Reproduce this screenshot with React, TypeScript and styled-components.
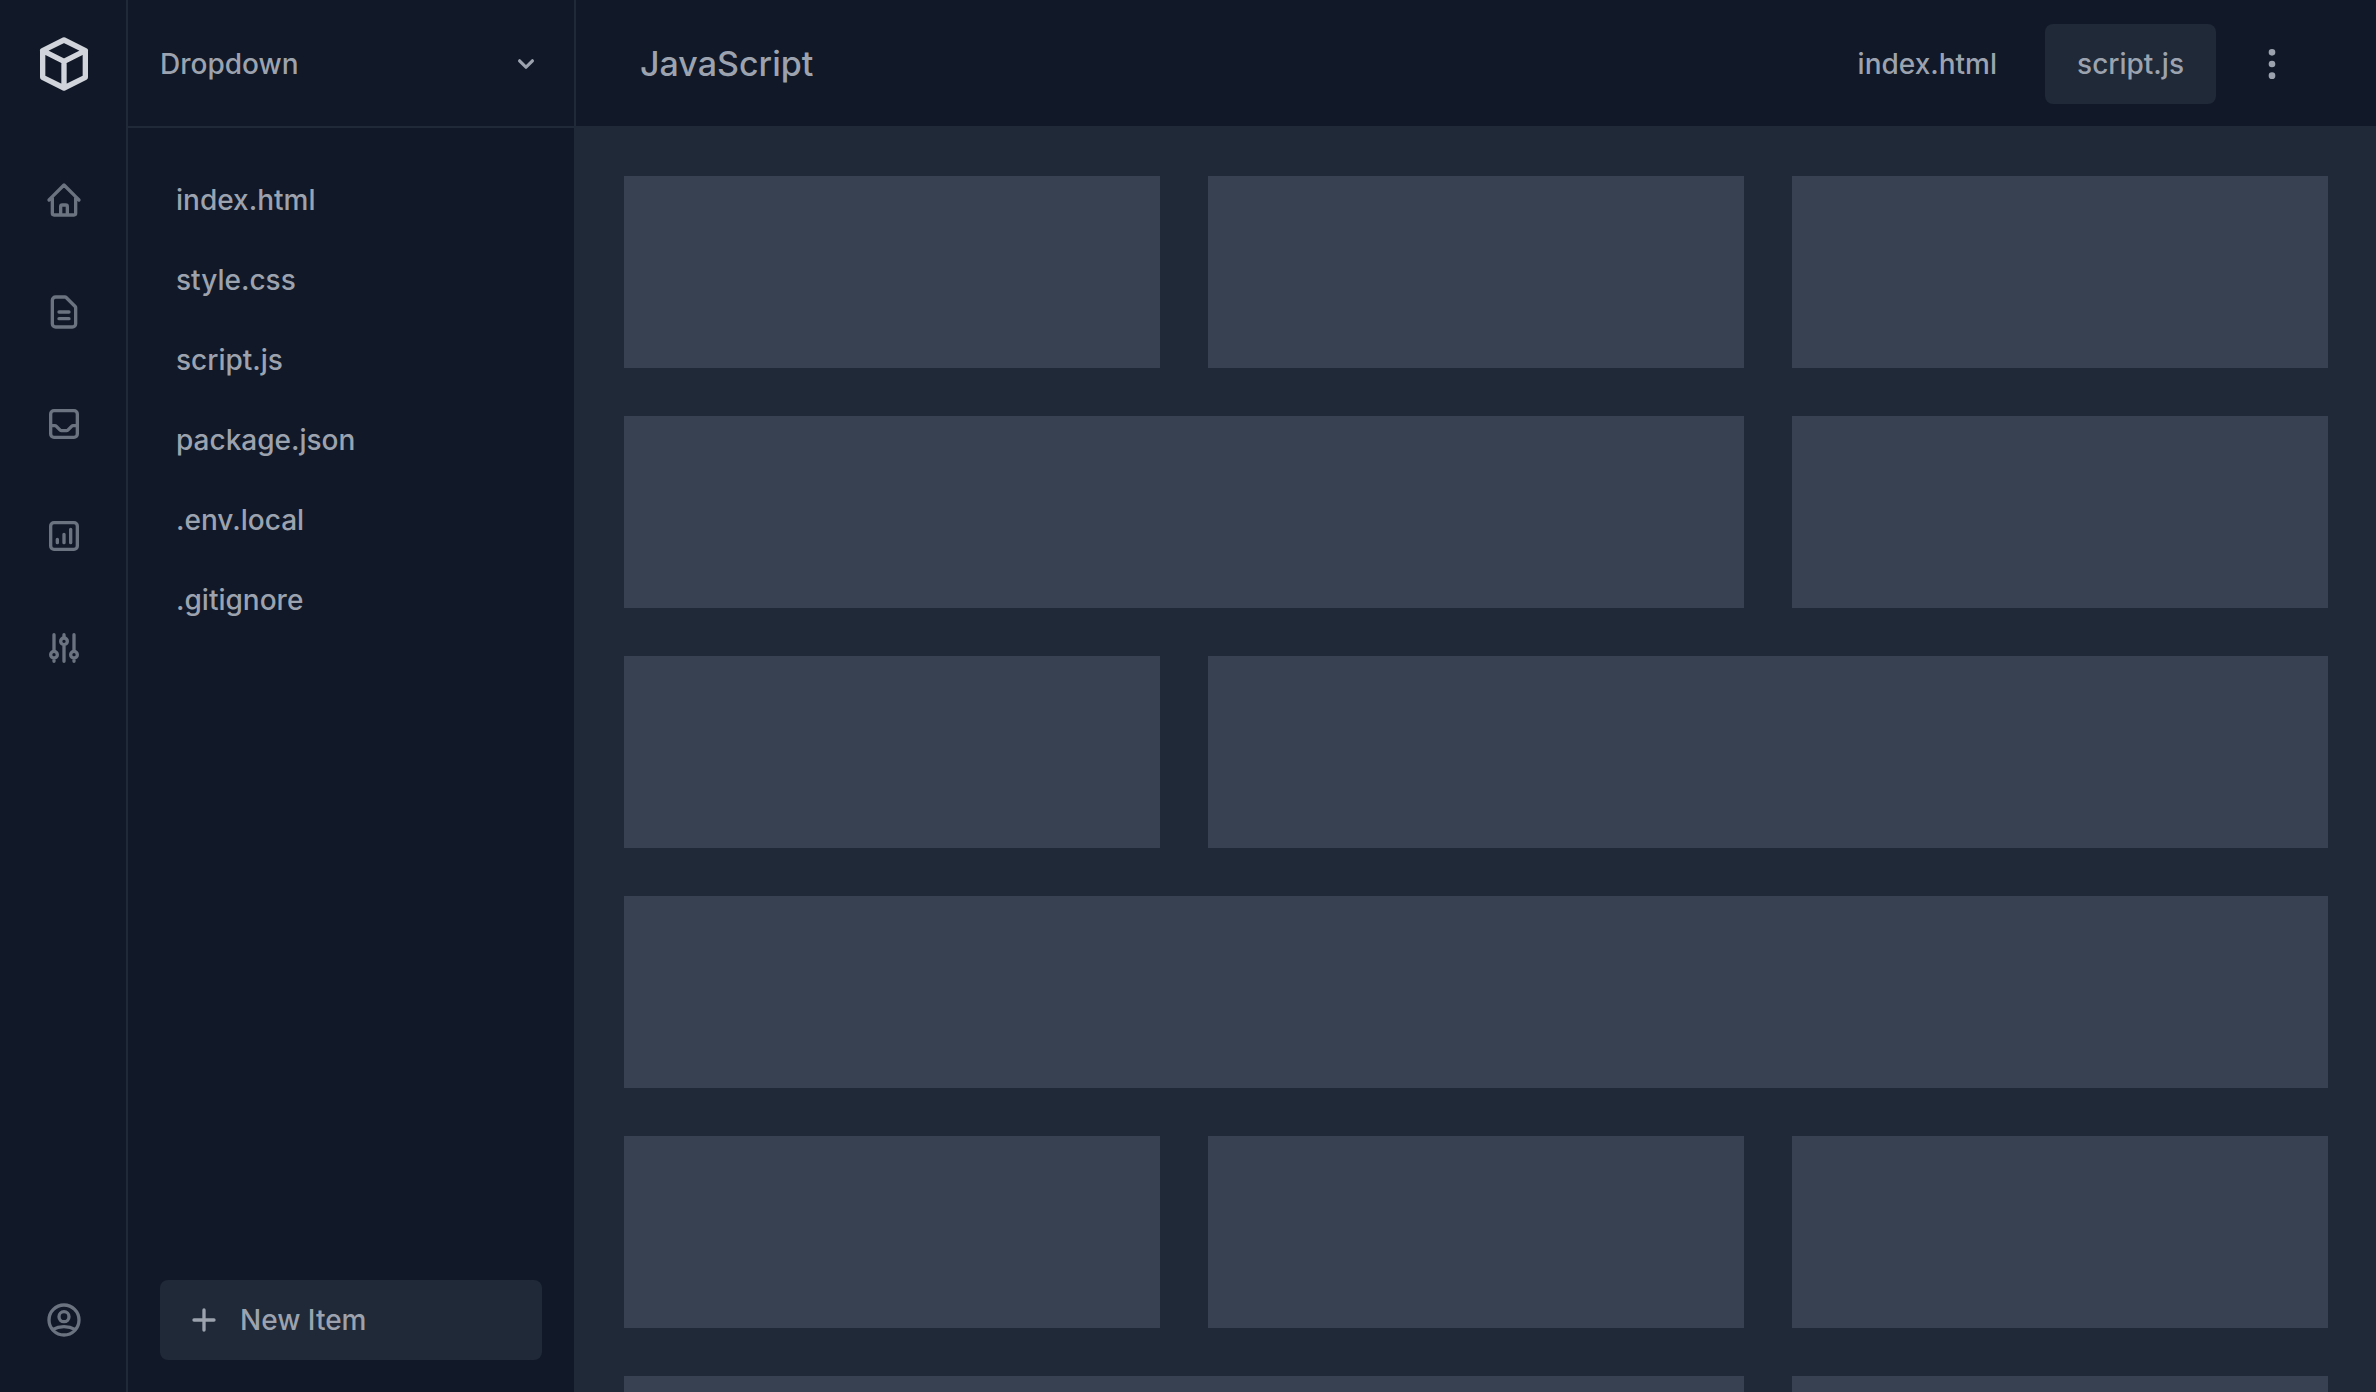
import React from "react";
import styled, { createGlobalStyle } from "styled-components";

const colors = {
  base: "#111827",
  line: "#1f2937",
  card: "#374151",
  muted: "#6b7280",
  text: "#9ca3af",
  bright: "#d1d5db",
};

const GlobalStyle = createGlobalStyle`
  *, *::before, *::after { box-sizing: border-box; }
  body {
    margin: 0;
    background: ${colors.line};
    color: ${colors.text};
    font: 500 28px/40px Inter, "Liberation Sans", sans-serif;
    -webkit-font-smoothing: antialiased;
  }
  button, a { font: inherit; color: inherit; }
`;

const Shell = styled.div`
  display: flex;
  height: 100vh;
  overflow: hidden;
`;

const Rail = styled.nav`
  display: flex;
  flex: none;
  flex-direction: column;
  align-items: center;
  width: 128px;
  padding-bottom: 32px;
  background: ${colors.base};
  box-shadow: inset -2px 0 ${colors.line};
`;

const Brand = styled.a`
  display: flex;
  align-items: center;
  justify-content: center;
  height: 128px;
  color: ${colors.bright};
`;

const RailLinks = styled.div`
  display: flex;
  flex: 1;
  flex-direction: column;
  gap: 32px;
  margin-top: 32px;
`;

const IconButton = styled.button<{ $muted?: boolean }>`
  display: flex;
  align-items: center;
  justify-content: center;
  width: 80px;
  height: 80px;
  padding: 0;
  border: 0;
  border-radius: 8px;
  background: none;
  color: ${(p) => (p.$muted ? colors.muted : colors.text)};
  cursor: pointer;
  &:hover { background: ${colors.line}; }
`;

const Sidebar = styled.aside`
  display: flex;
  flex: none;
  flex-direction: column;
  width: 448px;
  background: ${colors.base};
  border-right: 2px solid ${colors.line};
`;

const Dropdown = styled.button`
  display: flex;
  align-items: center;
  justify-content: space-between;
  height: 128px;
  padding: 0 32px;
  border: 0;
  background: none;
  box-shadow: inset 0 -2px ${colors.line};
  text-align: left;
  cursor: pointer;
`;

const Files = styled.nav`
  display: flex;
  flex: 1;
  flex-direction: column;
  padding: 32px 16px 0;
`;

const FileLink = styled.a`
  display: flex;
  align-items: center;
  height: 80px;
  padding: 0 32px;
  border-radius: 8px;
  text-decoration: none;
  &:hover { background: ${colors.line}; }
`;

const NewItem = styled.button`
  display: flex;
  align-items: center;
  gap: 16px;
  height: 80px;
  margin: 0 32px 32px;
  padding: 0 24px;
  border: 0;
  border-radius: 8px;
  background: ${colors.line};
  cursor: pointer;
`;

const Main = styled.main`
  display: flex;
  flex: 1;
  flex-direction: column;
  min-width: 0;
`;

const Header = styled.header`
  display: flex;
  flex: none;
  align-items: center;
  gap: 16px;
  height: 128px;
  padding: 0 64px;
  background: ${colors.base};
  box-shadow: inset 0 -2px ${colors.line};
`;

const Title = styled.h1`
  margin: 0 auto 0 0;
  font-size: 34px;
  font-weight: 500;
  line-height: 56px;
`;

const Tab = styled.button<{ $active?: boolean }>`
  height: 80px;
  padding: 0 32px;
  border: 0;
  border-radius: 8px;
  background: ${(p) => (p.$active ? colors.line : "none")};
  cursor: pointer;
`;

const Board = styled.section`
  display: grid;
  flex: 1;
  grid-template-columns: repeat(3, 1fr);
  grid-auto-rows: 192px;
  gap: 48px;
  padding: 48px;
  overflow: auto;
  scrollbar-width: none;
`;

const Card = styled.div<{ $span: number }>`
  grid-column: span ${(p) => p.$span};
  background: ${colors.card};
`;

const paths = {
  cube: "M20 7l-8-4-8 4m16 0l-8 4m8-4v10l-8 4m0-10L4 7m8 4v10M4 7v10l8 4",
  home: "M3 12l2-2m0 0l7-7 7 7M5 10v10a1 1 0 001 1h3m10-11l2 2m-2-2v10a1 1 0 01-1 1h-3m-6 0a1 1 0 001-1v-4a1 1 0 011-1h2a1 1 0 011 1v4a1 1 0 001 1m-6 0h6",
  document:
    "M9 12h6m-6 4h6m2 5H7a2 2 0 01-2-2V5a2 2 0 012-2h5.586a1 1 0 01.707.293l5.414 5.414a1 1 0 01.293.707V19a2 2 0 01-2 2z",
  inbox:
    "M20 13V6a2 2 0 00-2-2H6a2 2 0 00-2 2v7m16 0v5a2 2 0 01-2 2H6a2 2 0 01-2-2v-5m16 0h-2.586a1 1 0 00-.707.293l-2.414 2.414a1 1 0 01-.707.293h-3.172a1 1 0 01-.707-.293l-2.414-2.414A1 1 0 006.586 13H4",
  chart:
    "M16 8v8m-4-5v5m-4-2v2m-2 4h12a2 2 0 002-2V6a2 2 0 00-2-2H6a2 2 0 00-2 2v12a2 2 0 002 2z",
  sliders:
    "M12 6V4m0 2a2 2 0 100 4m0-4a2 2 0 110 4m-6 8a2 2 0 100-4m0 4a2 2 0 110-4m0 4v2m0-6V4m6 6v10m6-2a2 2 0 100-4m0 4a2 2 0 110-4m0 4v2m0-6V4",
  user: "M5.121 17.804A13.937 13.937 0 0112 16c2.5 0 4.847.655 6.879 1.804M15 10a3 3 0 11-6 0 3 3 0 016 0zm6 2a9 9 0 11-18 0 9 9 0 0118 0z",
  plus: "M12 6v6m0 0v6m0-6h6m-6 0H6",
  dots: "M12 5v.01M12 12v.01M12 19v.01M12 6a1 1 0 110-2 1 1 0 010 2zm0 7a1 1 0 110-2 1 1 0 010 2zm0 7a1 1 0 110-2 1 1 0 010 2z",
};

function Icon({ name, size = 40 }: { name: keyof typeof paths; size?: number }) {
  return (
    <svg
      width={size}
      height={size}
      viewBox="0 0 24 24"
      fill="none"
      stroke="currentColor"
      strokeWidth={2}
      strokeLinecap="round"
      strokeLinejoin="round"
      aria-hidden="true"
    >
      <path d={paths[name]} />
    </svg>
  );
}

function Chevron() {
  return (
    <svg width={32} height={32} viewBox="0 0 20 20" fill="currentColor" aria-hidden="true">
      <path
        fillRule="evenodd"
        clipRule="evenodd"
        d="M5.293 7.293a1 1 0 011.414 0L10 10.586l3.293-3.293a1 1 0 111.414 1.414l-4 4a1 1 0 01-1.414 0l-4-4a1 1 0 010-1.414z"
      />
    </svg>
  );
}

const railItems: { icon: keyof typeof paths; label: string }[] = [
  { icon: "home", label: "Home" },
  { icon: "document", label: "Documents" },
  { icon: "inbox", label: "Inbox" },
  { icon: "chart", label: "Reports" },
  { icon: "sliders", label: "Settings" },
];

const files = ["index.html", "style.css", "script.js", "package.json", ".env.local", ".gitignore"];

const cardSpans = [1, 1, 1, 2, 1, 1, 2, 3, 1, 1, 1, 2, 1];

export default function App() {
  return (
    <>
      <GlobalStyle />
      <Shell>
        <Rail aria-label="Primary">
          <Brand href="#" aria-label="Dashboard">
            <Icon name="cube" size={64} />
          </Brand>
          <RailLinks>
            {railItems.map((item) => (
              <IconButton key={item.icon} $muted aria-label={item.label}>
                <Icon name={item.icon} />
              </IconButton>
            ))}
          </RailLinks>
          <IconButton $muted aria-label="Account">
            <Icon name="user" />
          </IconButton>
        </Rail>
        <Sidebar>
          <Dropdown aria-haspopup="menu">
            Dropdown
            <Chevron />
          </Dropdown>
          <Files aria-label="Files">
            {files.map((file) => (
              <FileLink key={file} href="#">
                {file}
              </FileLink>
            ))}
          </Files>
          <NewItem>
            <Icon name="plus" />
            New Item
          </NewItem>
        </Sidebar>
        <Main>
          <Header>
            <Title>JavaScript</Title>
            <Tab>index.html</Tab>
            <Tab $active>script.js</Tab>
            <IconButton aria-label="More options">
              <Icon name="dots" />
            </IconButton>
          </Header>
          <Board>
            {cardSpans.map((span, i) => (
              <Card key={i} $span={span} />
            ))}
          </Board>
        </Main>
      </Shell>
    </>
  );
}
